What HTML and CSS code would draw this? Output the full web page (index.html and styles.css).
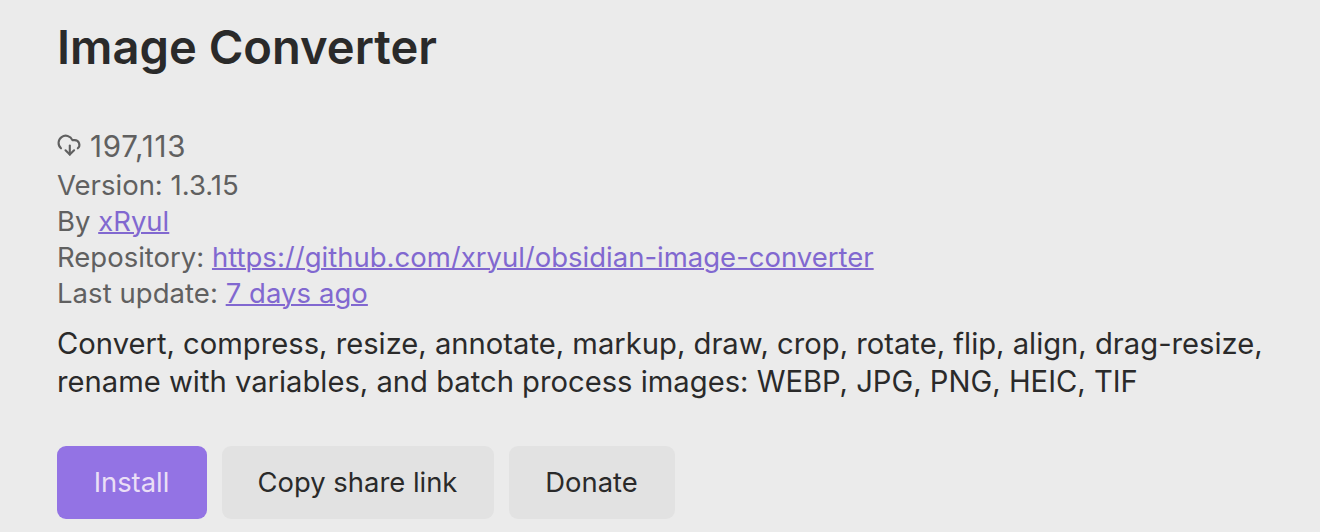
FILE: index.html
```html
<!DOCTYPE html>
<html lang="en">
<head>
<meta charset="utf-8">
<title>Image Converter</title>
<link rel="stylesheet" href="styles.css">
</head>
<body>
<main class="plugin">
  <h1 class="title">Image Converter</h1>
  <div class="downloads">
    <svg class="icon" viewBox="0 0 25 24" fill="none" stroke="currentColor" stroke-width="2.1" stroke-linecap="round" stroke-linejoin="round"><path d="M4 15.3A7.2 7.2 0 1 1 15.4 7.1h2.2a4.7 4.7 0 0 1 3.2 8.2"/><path d="M12.8 12.6v9"/><path d="m8.5 17.3 4.3 4.3 4.3-4.3"/></svg>
    <span>197,113</span>
  </div>
  <div class="meta">Version: 1.3.15</div>
  <div class="meta">By <a class="link" href="#">xRyul</a></div>
  <div class="meta">Repository: <a class="link" href="#">https://github.com/xryul/obsidian-image-converter</a></div>
  <div class="meta update">Last update: <a class="link" href="#">7 days ago</a></div>
  <p class="desc">Convert, compress, resize, annotate, markup, draw, crop, rotate, flip, align, drag-resize,<br>rename with variables, and batch process images: WEBP, JPG, PNG, HEIC, TIF</p>
  <div class="actions">
    <button class="btn primary">Install</button>
    <button class="btn share">Copy share link</button>
    <button class="btn donate">Donate</button>
  </div>
</main>
</body>
</html>
```

FILE: styles.css
```css
body { margin: 0; background: #ebebeb; font-family: Inter, sans-serif; color: #2a2a2a; overflow: hidden; }
.plugin { padding: 17px 0 0 57px; }
.title { margin: 0 0 51px; font-size: 47.1px; line-height: 60px; font-weight: 600; }
.downloads, .meta { color: #606060; font-size: 27.5px; line-height: 36px; white-space: nowrap; }
.downloads { display: flex; align-items: center; gap: 8px; height: 36px; margin-bottom: 3px; font-size: 29.5px; letter-spacing: 0.75px; }
.icon { width: 25px; height: 24px; margin-bottom: 2px; }
.update { letter-spacing: 0.05px; }
.link { color: #8168d0; text-decoration: underline; text-decoration-thickness: 2px; }
.desc { margin: 14px 0 0; font-size: 29.2px; line-height: 38px; white-space: nowrap; }
.actions { display: flex; gap: 15px; margin-top: 45px; }
.btn { height: 73px; padding: 0 1px 2px 0; border: 0; border-radius: 9px; background: #e2e2e2; color: #2a2a2a; font: 27.4px Inter, sans-serif; }
.primary { width: 150px; background: #9373e4; color: #eadff6; }
.share { width: 272px; }
.donate { width: 166px; }
```
